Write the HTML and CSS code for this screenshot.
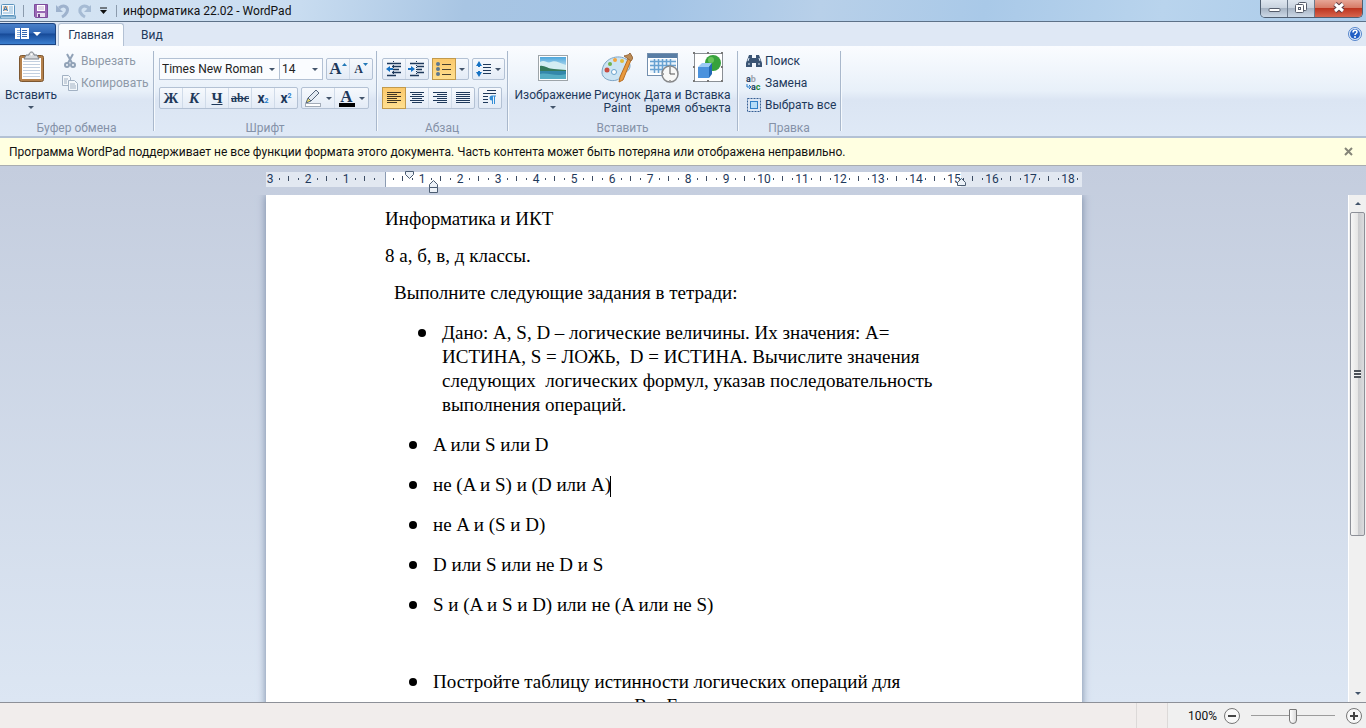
FILE: index.html
```
<!DOCTYPE html>
<html lang="ru">
<head>
  <meta charset="UTF-8" />
  <meta name="viewport" content="width=device-width, initial-scale=1.0"/>
  <title>информатика 22.02 - WordPad</title>
  <link rel="stylesheet" href="styles.css">
</head>
<body>
  <header class="titlebar">
    <svg class="app-icon" width="16" height="16" viewBox="0 0 16 16"><rect x="1.500" y="1.500" width="13" height="11" rx="1" fill="#f4faff" stroke="#5b93bd"/><rect x="3" y="3" width="5" height="5" fill="#f4c9a4"/><path d="M3.500 8l2-5 2 5M4 6.500h3" fill="none" stroke="#3d7db4"/><path d="M9 4h4M9 6h4M9 8h4M3 10h10" stroke="#8cb6d6"/><path d="M0 13h16l-1 3H1z" fill="#a9cbe2" stroke="#5b93bd"/></svg>
    <span class="title-sep"></span>
    <button class="quick-btn" aria-label="Сохранить"><svg width="16" height="16" viewBox="0 0 16 16"><path d="M1.500 1.500h13v13h-12l-1-1z" fill="#9968b5" stroke="#7d4c9c"/><rect x="4" y="2" width="8" height="6" fill="#fff"/><path d="M5 4h6M5 6h6" stroke="#c6b3d3"/><rect x="4" y="10" width="8" height="4" fill="#e9dff0"/><rect x="5" y="11" width="2" height="3" fill="#724590"/></svg></button>
    <button class="quick-btn" aria-label="Отменить"><svg width="16" height="16" viewBox="0 0 16 16"><path d="M4 5c5-4 10-1 8 4-1 2-3 4-5 5" fill="none" stroke="#9eb2cd" stroke-width="3"/><path d="M1 2v7h7z" fill="#9eb2cd"/></svg></button>
    <button class="quick-btn" aria-label="Повторить"><svg width="16" height="16" viewBox="0 0 16 16"><path d="M12 5c-5-4-10-1-9 4 1 2 3 4 5 5" fill="none" stroke="#a6bbd4" stroke-width="3"/><path d="M14 2v7H7z" fill="#a6bbd4"/></svg></button>
    <button class="quick-btn quick-more" aria-label="Настройка панели"><svg width="9" height="7" viewBox="0 0 9 7"><path d="M1 1h7" stroke="#111"/><path d="M1 3h7L4.500 7z" fill="#111"/></svg></button>
    <span class="title-sep"></span>
    <h1 class="title">информатика 22.02 - WordPad</h1>
    <div class="window-btns">
      <button class="win-btn" aria-label="Свернуть"><svg width="13" height="16" viewBox="0 0 13 16"><rect x="1" y="8.500" width="11" height="3" rx="1" fill="#fff" stroke="#555c6b"/></svg></button>
      <button class="win-btn" aria-label="Восстановить"><svg width="14" height="16" viewBox="0 0 14 16"><g fill="#fff" stroke="#555c6b"><rect x="4.500" y="2.500" width="8" height="8" rx="1"/><rect x="1.500" y="4.500" width="8" height="8" rx="1"/><rect x="4.500" y="7.500" width="2" height="2"/></g></svg></button>
      <button class="win-btn close-btn" aria-label="Закрыть"><svg width="14" height="16" viewBox="0 0 14 16"><path d="M3 4l8 7M11 4l-8 7" stroke="#5a3a42" stroke-width="5"/><path d="M3 4l8 7M11 4l-8 7" stroke="#fff" stroke-width="3"/></svg></button>
    </div>
  </header>

  <nav class="tabs">
    <button class="file-btn" aria-label="WordPad">
      <svg width="26" height="12" viewBox="0 0 26 12"><rect width="14" height="11" fill="#fff"/><path d="M2 2.500h3M2 4.500h3M2 6.500h3M2 8.500h3" stroke="#86aee0"/><path d="M5.500 0v11" stroke="#2b62b5"/><path d="M7 2.500h5M7 4.500h5M7 6.500h5M7 8.500h5" stroke="#3568b0"/><path d="M18 4h8l-4 4z" fill="#fff"/></svg>
    </button>
    <a href="#" class="tab active">Главная</a>
    <a href="#" class="tab">Вид</a>
    <button class="help-btn" aria-label="Справка"><svg width="14" height="14" viewBox="0 0 14 14"><circle cx="7" cy="7" r="6.500" fill="#dfeafa" stroke="#5585ca"/><circle cx="7" cy="7" r="5" fill="#225fc5"/><path d="M5 5.500c0-3 4-3 4-.5 0 1.500-2 1.500-2 3M7 9v2" fill="none" stroke="#fff" stroke-width="1.500"/></svg></button>
  </nav>

  <section class="ribbon">
    <div class="group group-clipboard">
      <div class="group-body">
        <button class="big-btn paste-btn">
          <svg width="32" height="32" viewBox="0 0 32 32"><rect x="4.500" y="4.500" width="24" height="26" rx="2" fill="#b5814c" stroke="#7d5730"/><path d="M7 7h19v21H7z" fill="#fff"/><path d="M8 10.500h17M8 13.500h17M8 16.500h17M8 19.500h17M8 22.500h17M8 25.500h17" stroke="#c3d0e0"/><path d="M9 8l2-4h3c0-4 5-4 5 0h3l2 4z" fill="#d5d8dc" stroke="#777d85"/><circle cx="16.500" cy="3.500" r="1" fill="#fff"/></svg>
          <span>Вставить</span>
          <i class="arrow"></i>
        </button>
        <div class="stack">
          <button class="line-btn" disabled><svg width="16" height="16" viewBox="0 0 16 16"><path d="M5 1l5 9M11 1l-5 9" stroke="#91a2b7" stroke-width="2"/><circle cx="5" cy="12" r="2" fill="none" stroke="#91a2b7" stroke-width="2"/><circle cx="11" cy="12" r="2" fill="none" stroke="#91a2b7" stroke-width="2"/></svg>Вырезать</button>
          <button class="line-btn" disabled><svg width="16" height="16" viewBox="0 0 16 16"><g fill="#f3f7fb" stroke="#a2b1c3"><path d="M.5.5h6l2 2v8h-8z"/><path d="M6.500 5.500h6l3 3v7h-9z"/></g><path d="M2 4h4M2 6h3M2 8h3M8 9h5M8 11h6M8 13h6" stroke="#a2b1c3"/></svg>Копировать</button>
        </div>
      </div>
      <h2>Буфер обмена</h2>
    </div>

    <div class="group group-font">
      <div class="group-body rows">
        <div class="row">
          <div class="combos">
            <label class="combo combo-font"><select aria-label="Шрифт"><option>Times New Roman</option></select></label>
            <label class="combo combo-size"><select aria-label="Размер"><option>14</option></select></label>
          </div>
          <div class="btns">
            <button class="tool serif grow" aria-label="Увеличить шрифт">A<svg width="5" height="3" viewBox="0 0 5 3"><path d="M0 3h5L2.500 0z" fill="#2379b8"/></svg></button>
            <button class="tool serif shrink" aria-label="Уменьшить шрифт">A<svg width="5" height="3" viewBox="0 0 5 3"><path d="M0 0h5L2.500 3z" fill="#2379b8"/></svg></button>
          </div>
        </div>
        <div class="row">
          <div class="btns">
            <button class="tool serif">Ж</button>
            <button class="tool serif italic">К</button>
            <button class="tool serif under">Ч</button>
            <button class="tool serif strike">abc</button>
            <button class="tool index">x<sub>2</sub></button>
            <button class="tool index">x<sup>2</sup></button>
          </div>
          <div class="btns">
            <button class="tool wide" aria-label="Цвет выделения"><svg width="18" height="18" viewBox="0 0 18 18"><path d="M4 9l8-8 3 3-8 8z" fill="#e2e9f2" stroke="#53647b"/><path d="M4 9l3 3-5 2z" fill="#f0dc63" stroke="#53647b"/><rect x="1.500" y="14.500" width="15" height="3" fill="#fff" stroke="#a3acb8"/></svg><i class="arrow"></i></button>
            <button class="tool wide serif" aria-label="Цвет текста"><span class="font-color">A</span><i class="arrow"></i></button>
          </div>
        </div>
      </div>
      <h2>Шрифт</h2>
    </div>

    <div class="group group-para">
      <div class="group-body rows">
        <div class="row">
          <div class="btns">
            <button class="tool" aria-label="Уменьшить отступ"><svg width="18" height="16" viewBox="0 0 18 16"><path d="M2 2.500h14M7 5.500h9M8 8.500h6M7 11.500h9M2 14.500h9" stroke="#1e395b" stroke-width="1.500"/><path d="M8.500 0v16" stroke="#1e395b" stroke-dasharray="1 1"/><path d="M1 8l4-3v2h3v2H5v2z" fill="#1672c4"/></svg></button>
            <button class="tool" aria-label="Увеличить отступ"><svg width="18" height="16" viewBox="0 0 18 16"><path d="M2 2.500h14M9 5.500h7M9 8.500h5M9 11.500h7M2 14.500h9" stroke="#1e395b" stroke-width="1.500"/><path d="M8.500 0v16" stroke="#1e395b" stroke-dasharray="1 1"/><path d="M7 8L3 5v2H0v2h3v2z" fill="#1672c4"/></svg></button>
          </div>
          <div class="btns">
            <button class="tool on" aria-label="Список"><svg width="16" height="14" viewBox="0 0 16 14"><path d="M6 2.500h9M6 7.500h9M6 12.500h9" stroke="#49412f"/><g fill="#5d7890"><circle cx="2" cy="2" r="2"/><circle cx="2" cy="7" r="2"/><circle cx="2" cy="12" r="2"/></g></svg></button>
            <button class="tool tiny" aria-label="Виды списков"><i class="arrow"></i></button>
          </div>
          <div class="btns">
            <button class="tool spacing" aria-label="Интервал"><svg width="16" height="16" viewBox="0 0 16 16"><path d="M7 3.500h8M7 6.500h8M7 9.500h8M7 12.500h8" stroke="#1e395b"/><path d="M0 5l3-5 3 5H4v1H2V5zM0 11h2v-1h2v1h2l-3 5z" fill="#1672c4"/></svg><i class="arrow"></i></button>
          </div>
        </div>
        <div class="row">
          <div class="btns">
            <button class="tool on" aria-label="По левому краю"><svg width="15" height="13" viewBox="0 0 15 13"><path d="M0 .5h14M0 2.500h10M0 4.500h14M0 6.500h10M0 8.500h14M0 10.500h10" stroke="#403623"/></svg></button>
            <button class="tool" aria-label="По центру"><svg width="15" height="13" viewBox="0 0 15 13"><path d="M0 .5h14M2 2.500h10M0 4.500h14M2 6.500h10M0 8.500h14M2 10.500h10" stroke="#1e395b"/></svg></button>
            <button class="tool" aria-label="По правому краю"><svg width="15" height="13" viewBox="0 0 15 13"><path d="M0 .5h14M4 2.500h10M0 4.500h14M4 6.500h10M0 8.500h14M4 10.500h10" stroke="#1e395b"/></svg></button>
            <button class="tool" aria-label="По ширине"><svg width="15" height="13" viewBox="0 0 15 13"><path d="M0 .5h14M0 2.500h14M0 4.500h14M0 6.500h14M0 8.500h14M0 10.500h14" stroke="#1e395b"/></svg></button>
          </div>
          <div class="btns">
            <button class="tool" aria-label="Абзац"><svg width="14" height="16" viewBox="0 0 14 16"><path d="M4 .5h9M0 3.500h13M0 6.500h5M0 9.500h5M0 12.500h5" stroke="#1e395b"/><path d="M9.500 6v8M11.500 6v8M9 6h4" stroke="#348ed6"/><path d="M9 5.500a2.500 2.500 0 0 0 0 5z" fill="#348ed6"/></svg></button>
          </div>
        </div>
      </div>
      <h2>Абзац</h2>
    </div>

    <div class="group group-insert">
      <div class="group-body">
        <button class="big-btn">
          <svg width="32" height="32" viewBox="0 0 32 32"><defs><linearGradient id="sky" x2="0" y2="1"><stop offset="0" stop-color="#4da6dc"/><stop offset="1" stop-color="#e2f4f6"/></linearGradient></defs><rect x="1.500" y="4.500" width="29" height="25" fill="#fff" stroke="#9da4a9"/><rect x="3" y="6" width="26" height="14" fill="url(#sky)"/><path d="M3 11c5-3 7 2 11 0s8 1 15 3v6H3z" fill="#d3edf3"/><path d="M3 15c4-1 8 3 14 3l12 1v2H3z" fill="#34795b"/><path d="M3 20h26v8H3z" fill="#3387aa"/><path d="M3 23c8-2 15 3 26 0v5H3z" fill="#54acc3"/></svg>
          <span>Изображение</span>
          <i class="arrow"></i>
        </button>
        <button class="big-btn">
          <svg width="32" height="32" viewBox="0 0 32 32"><path d="M5 11C14 2 29 6 29 15c0 7-8 5-9 10-2 7-18 6-19-3 0-4 1-8 4-11z" fill="#cce4f3" stroke="#7ba3c3"/><circle cx="14" cy="9" r="2" fill="#f5a43b"/><circle cx="21" cy="10" r="2" fill="#e2bd3a"/><circle cx="9" cy="13" r="2" fill="#72b24d"/><circle cx="6" cy="19" r="2.500" fill="#c84d42"/><circle cx="13" cy="21" r="2.500" fill="#fff" stroke="#6ba3cd"/><path d="M27 8l3 1-8 20-4 2 1-5z" fill="#e99a3d" stroke="#b66d24"/><path d="M23 5c2-1 4 0 6-3l3 5-2 3z" fill="#bb8b55" stroke="#98683b"/></svg>
          <span>Рисунок<br>Paint</span>
        </button>
        <button class="big-btn">
          <svg width="32" height="32" viewBox="0 0 32 32"><rect x=".5" y="2.500" width="30" height="22" fill="#fff" stroke="#738fae"/><rect x="1" y="3" width="29" height="4" fill="#587da5"/><path d="M3 8h26v14H3z" fill="#e9f3fb"/><path d="M3 10.500h26M3 14.500h26M3 18.500h26M7.500 8v14M11.500 8v14M15.500 8v14M19.500 8v14M23.500 8v14" stroke="#67a1d1" stroke-width="1.500"/><circle cx="23" cy="23" r="8" fill="#f8f8f7" stroke="#868789" stroke-width="1.500"/><path d="M23 17v6h5M23 16v1M23 29v1M16 23h1" fill="none" stroke="#555"/></svg>
          <span>Дата и<br>время</span>
        </button>
        <button class="big-btn">
          <svg width="32" height="32" viewBox="0 0 32 32"><rect x="2.500" y="2.500" width="28" height="28" fill="#fff" stroke="#8a8f95"/><circle cx="21" cy="12" r="8" fill="#36a23d"/><circle cx="19" cy="9" r="3" fill="#68c45b"/><path d="M6 16l4-4h10l-3 4z" fill="#9bcaf5"/><path d="M6 16h11v11H6z" fill="#4b92dd"/><path d="M17 16l3-4v11l-3 4z" fill="#2368b5"/><g fill="#777"><path d="M1 1h2v2H1zM15 1h2v2h-2zM29 1h2v2h-2zM1 29h2v2H1zM15 29h2v2h-2zM29 29h2v2h-2zM1 15h2v2H1zM29 15h2v2h-2z"/></g></svg>
          <span>Вставка<br>объекта</span>
        </button>
      </div>
      <h2>Вставить</h2>
    </div>

    <div class="group group-edit">
      <div class="group-body stack">
        <button class="line-btn"><svg width="16" height="16" viewBox="0 0 16 16"><path d="M3 2h3v3h4V2h3l3 8v4h-6v-4H6v4H0v-4z" fill="#3a5474"/><path d="M2 8l1-3M13 5l1 3M2 11h2M12 11h2" stroke="#dce8f4"/></svg>Поиск</button>
        <button class="line-btn"><svg class="replace-icon" width="16" height="16" viewBox="0 0 16 16"><text x="0" y="7" fill="#243f63">a<tspan fill="#a0a5ad">b</tspan></text><text x="5" y="15" fill="#243f63">a<tspan fill="#1c8a3a">c</tspan></text><path d="M1 9v3h3M3 10l2 2-2 2" fill="none" stroke="#2379c9"/></svg>Замена</button>
        <button class="line-btn"><svg width="16" height="16" viewBox="0 0 16 16"><rect x="1.500" y="1.500" width="13" height="13" fill="none" stroke="#355e94" stroke-dasharray="2 1"/><rect x="4.500" y="4.500" width="7" height="7" fill="#b5dcf8" stroke="#2f7fc8"/></svg>Выбрать все</button>
      </div>
      <h2>Правка</h2>
    </div>
  </section>

  <div class="infobar">
    <p>Программа WordPad поддерживает не все функции формата этого документа. Часть контента может быть потеряна или отображена неправильно.</p>
    <button aria-label="Закрыть сообщение"><svg width="9" height="9" viewBox="0 0 9 9"><path d="M1 1l7 7M8 1L1 8" stroke="#858578" stroke-width="2"/></svg></button>
  </div>

  <main class="workspace">
    <div class="ruler">
      <div class="scale">
        <span>3</span><span>2</span><span>1</span><span></span><span>1</span><span>2</span><span>3</span><span>4</span><span>5</span><span>6</span><span>7</span><span>8</span><span>9</span><span>10</span><span>11</span><span>12</span><span>13</span><span>14</span><span>15</span><span>16</span><span>17</span><span>18</span>
      </div>
      <svg class="marker first-indent" width="10" height="8" viewBox="0 0 10 8"><path d="M.5.5h8v3l-4 4-4-4z" fill="#edf2f8" stroke="#4c5d72"/></svg>
      <svg class="marker left-indent" width="10" height="14" viewBox="0 0 10 14"><path d="M.5 7.500v-3l4-4 4 4v3zM.5 7.500h8v5h-8z" fill="#edf2f8" stroke="#4c5d72"/></svg>
      <svg class="marker right-indent" width="10" height="9" viewBox="0 0 10 9"><path d="M.5 7.500v-3l4-4 4 4v3z" fill="#edf2f8" stroke="#4c5d72"/></svg>
    </div>
    <div class="view">
      <article class="page">
        <p>Информатика и ИКТ</p>
        <p>8 а, б, в, д классы.</p>
        <p class="task">Выполните следующие задания в тетради:</p>
        <ul class="outer">
          <li><span>Дано: A, S, D – логические величины. Их значения: A=<br>ИСТИНА, S = ЛОЖЬ,&nbsp; D = ИСТИНА. Вычислите значения<br>следующих&nbsp; логических формул, указав последовательность<br>выполнения операций.</span></li>
        </ul>
        <ul>
          <li><span>A или S или D</span></li>
          <li><span>не (A и S) и (D или A)<i class="caret"></i></span></li>
          <li><span>не A и (S и D)</span></li>
          <li><span>D или S или не D и S</span></li>
          <li><span>S и (A и S и D) или не (A или не S)</span></li>
        </ul>
        <p>&nbsp;</p>
        <ul>
          <li><span>Постройте таблицу истинности логических операций для<br>нескольких переменных В и Е</span></li>
        </ul>
      </article>
    </div>
    <div class="scrollbar">
      <button aria-label="Вверх"><i class="arrow up"></i></button>
      <div class="thumb"><span></span></div>
      <button aria-label="Вниз"><i class="arrow"></i></button>
    </div>
  </main>

  <footer class="status">
    <span class="pane"></span>
    <div class="zoom">
      <label for="zoom">100%</label>
      <button aria-label="Уменьшить"><svg width="16" height="16" viewBox="0 0 16 16"><circle cx="8" cy="8" r="7.500" fill="#f8f8f8" stroke="#777"/><path d="M4 8h8" stroke="#444" stroke-width="2"/></svg></button>
      <input type="range" id="zoom" min="0" max="100" value="50">
      <button aria-label="Увеличить"><svg width="16" height="16" viewBox="0 0 16 16"><circle cx="8" cy="8" r="7.500" fill="#f8f8f8" stroke="#777"/><path d="M4 8h8M8 4v8" stroke="#444" stroke-width="2"/></svg></button>
    </div>
  </footer>
</body>
</html>
```
FILE: styles.css
```
:root {
  --text: #1e395b;
  --muted: #8592a8;
  --line: #b3c1d4;
}

* {
  box-sizing: border-box;
}

body {
  margin: 0;
  height: 100vh;
  display: flex;
  flex-direction: column;
  overflow: hidden;
  font-family: Roboto, "Open Sans", sans-serif;
  font-size: 12px;
  line-height: 16px;
  color: var(--text);
}

button {
  margin: 0;
  padding: 0;
  border: none;
  background: none;
  font: inherit;
  color: inherit;
}

svg {
  display: block;
  flex: none;
}

h1, h2, p, ul {
  margin: 0;
  padding: 0;
  font-size: 12px;
  font-weight: normal;
}

.arrow {
  border: 3px solid transparent;
  border-top-color: #43546b;
  border-bottom: none;
}

.arrow.up {
  border-top: none;
  border-bottom: 3px solid #43546b;
}

/* title bar */
.titlebar {
  display: flex;
  align-items: center;
  height: 22px;
  background: linear-gradient(100deg, #d8e6f4, #c8dcf0 22%, #a8c5e3 34%, #a3c4e6 48%, #b8d0e9 60%, #a9c9e8 72%, #b9d4ed 85%, #a9cae9);
  border-bottom: 1px solid #5d7188;
}

.title-sep {
  width: 1px;
  height: 12px;
  margin: 0 6px 0 7px;
  background: #8b9bad;
}

.quick-btn {
  margin: 0 3px;
}

.quick-more {
  margin: 0 1px 0 3px;
}

.title {
  color: #111;
}

.window-btns {
  display: flex;
  align-self: flex-start;
  margin-left: auto;
  margin-right: 3px;
  border: 1px solid #4f5e71;
  border-top: none;
  border-radius: 0 0 5px 5px;
  overflow: hidden;
}

.win-btn {
  width: 27px;
  height: 17px;
  display: flex;
  justify-content: center;
  background: linear-gradient(#dee6ef, #c9d3df 45%, #a7b4c4 50%, #ccd8e6);
  border-right: 1px solid #6c7a8c;
}

.close-btn {
  width: 47px;
  border: none;
  background: linear-gradient(#e6a596, #d77b67 45%, #bd3520 50%, #d7654d);
}

/* tabs */
.tabs {
  display: flex;
  align-items: flex-end;
  height: 24px;
  background: #dfe8f5;
}

.file-btn {
  width: 56px;
  height: 22px;
  margin: 0 2px 1px 0;
  display: flex;
  justify-content: center;
  align-items: center;
  border: 1px solid #1b4380;
  border-left: none;
  border-radius: 0 3px 0 0;
  background: linear-gradient(#4a80c8, #2f66b5 45%, #174a98 50%, #3b7fd0);
}

.tab {
  height: 23px;
  padding: 3px 12px 0;
  border: 1px solid transparent;
  color: var(--text);
  text-decoration: none;
}

.tab.active {
  width: 66px;
  padding: 3px 0 0;
  text-align: center;
  background: #fbfdff;
  border-color: var(--line);
  border-bottom: none;
  border-radius: 3px 3px 0 0;
}

.tab + .tab {
  margin-left: 4px;
}

.help-btn {
  align-self: center;
  margin-left: auto;
  margin-right: 4px;
}

/* ribbon */
.ribbon {
  display: flex;
  height: 92px;
  padding-top: 5px;
  background: linear-gradient(#fafcff, #e8f0f9 50%, #dbe5f3 60%, #dfe9f6);
  border-bottom: 2px solid var(--line);
}

.group {
  display: flex;
  flex-direction: column;
  justify-content: space-between;
  height: 80px;
  border-right: 1px solid #a9b8cc;
  box-shadow: 1px 0 0 #f5f9fd;
}

.group h2 {
  text-align: center;
  color: var(--muted);
  line-height: 10px;
  margin-bottom: -2px;
}

.group-body {
  display: flex;
  padding-left: 5px;
}

.group-clipboard {
  width: 154px;
}

.group-clipboard .group-body {
  padding-left: 0;
}

.group-font {
  width: 223px;
}

.group-para {
  width: 131px;
}

.group-insert {
  width: 230px;
}

.group-edit {
  width: 103px;
}

.big-btn {
  display: flex;
  flex-direction: column;
  align-items: center;
  min-width: 42px;
  padding: 0 1px;
  line-height: 13px;
  white-space: nowrap;
}

.big-btn:first-child {
  min-width: 80px;
}

.big-btn svg {
  margin-bottom: 6px;
}

.big-btn .arrow {
  margin-top: 4px;
}

.big-btn.paste-btn {
  min-width: 62px;
}

.stack {
  display: flex;
  flex-direction: column;
  gap: 6px;
  padding-top: 2px;
}

.group-edit .stack {
  padding-left: 8px;
}

.line-btn {
  display: flex;
  align-items: center;
  gap: 3px;
  white-space: nowrap;
}

.line-btn:disabled {
  color: #8e99a8;
}

.replace-icon {
  overflow: visible;
  font-size: 9px;
  font-weight: bold;
  line-height: 8px;
}

.rows {
  flex-direction: column;
  gap: 7px;
  padding-top: 7px;
}

.row {
  display: flex;
  gap: 3px;
}

.btns {
  display: flex;
  height: 22px;
  border: 1px solid var(--line);
  border-radius: 2px;
  background: linear-gradient(#f6f9fd, #e3ebf6);
}

.tool {
  width: 23px;
  display: flex;
  justify-content: center;
  align-items: center;
  border-right: 1px solid #d0dbe9;
}

.tool.on {
  width: 24px;
  margin: -1px 0 -1px -1px;
  border: 1px solid #c29a4c;
  background: linear-gradient(#fbc96c, #ffdf8f);
}

.tool:last-child {
  width: 22px;
  border-right: none;
}

.tool.wide {
  width: 33px;
  gap: 4px;
}

.tool.tiny {
  width: 12px;
}

.tool.spacing {
  width: 31px;
  gap: 3px;
}

.serif {
  font-family: "Liberation Serif", serif;
  font-weight: bold;
  font-size: 15px;
}

.grow {
  font-size: 17px;
}

.shrink {
  font-size: 12px;
}

.grow svg,
.shrink svg {
  align-self: flex-start;
  margin-top: 4px;
}

.italic {
  font-style: italic;
}

.under {
  text-decoration: underline;
}

.strike {
  font-size: 12px;
  text-decoration: line-through;
}

.index {
  font-weight: bold;
  font-size: 14px;
}

.index sub,
.index sup {
  font-size: 7px;
  line-height: 8px;
  color: #2379c9;
}

.index sub {
  align-self: flex-end;
  margin-bottom: 3px;
}

.index sup {
  align-self: flex-start;
  margin-top: 4px;
}

.font-color {
  width: 16px;
  font-size: 17px;
  line-height: 13px;
  border-bottom: 4px solid #000;
}

.combos {
  display: flex;
}

.combo {
  display: flex;
  align-items: center;
  height: 22px;
  border: 1px solid var(--line);
  background: #fafcff;
}

.combo select {
  width: 100%;
  padding: 0 2px;
  border: none;
  appearance: none;
  background: none;
  font: inherit;
  color: #222;
}

.combo::after {
  content: "";
  flex: none;
  margin-right: 4px;
  border: 3px solid transparent;
  border-top-color: #43546b;
  border-bottom: none;
}

.combo-font {
  width: 121px;
}

.combo-size {
  width: 43px;
  border-left: none;
}

/* message */
.infobar {
  display: flex;
  align-items: center;
  justify-content: space-between;
  height: 28px;
  padding: 0 13px 0 9px;
  background: #ffffe1;
  border-bottom: 1px solid #a9adb0;
  color: #111;
  white-space: nowrap;
}

/* document */
.workspace {
  flex: 1;
  min-height: 0;
  display: grid;
  grid-template-columns: 1fr 18px;
  grid-template-rows: 29px 1fr;
  background: linear-gradient(#c4cdde, #dce6f3);
}

.ruler {
  position: relative;
  width: 816px;
  height: 15px;
  margin: 6px auto 0;
  background: linear-gradient(90deg, #e2e8f1 119px, #8b9bb2 119px, #8b9bb2 120px, #fff 120px, #fff 695px, #e2e8f1 695px);
}

.scale {
  display: flex;
  overflow: hidden;
}

.scale span {
  flex: none;
  width: 38px;
  height: 15px;
  line-height: 14px;
  text-align: center;
  background:
    linear-gradient(#3c4c63, #3c4c63) 9px 6px / 1px 2px no-repeat,
    linear-gradient(#3c4c63, #3c4c63) 28px 6px / 1px 2px no-repeat,
    linear-gradient(#3c4c63, #3c4c63) 37px 4px / 1px 5px no-repeat;
}

.scale span:first-child {
  margin-left: -15px;
}

.marker {
  position: absolute;
}

.first-indent {
  left: 139px;
  top: -1px;
}

.left-indent {
  left: 163px;
  top: 8px;
}

.right-indent {
  left: 691px;
  top: 6px;
}

.view {
  grid-column: 1;
  min-height: 0;
  overflow: hidden;
}

.page {
  width: 816px;
  min-height: 100%;
  margin: 0 auto;
  padding: 12px 119px 0;
  background: #fff;
  box-shadow: 0 0 8px #7486a3;
  font-family: "Liberation Serif", serif;
  font-size: 19px;
  line-height: 24px;
  color: #000;
  white-space: nowrap;
}

.page p {
  margin-bottom: 13px;
  font-size: 19px;
}

.page .task {
  margin-bottom: 16px;
  padding-left: 9px;
}

.page ul {
  padding-left: 24px;
  list-style: none;
  font-size: 19px;
}

.page .outer {
  padding-left: 33px;
}

.page li {
  display: flex;
  gap: 16px;
  margin-bottom: 16px;
}

.page li::before {
  content: "";
  flex: none;
  width: 8px;
  height: 8px;
  margin-top: 8px;
  border-radius: 50%;
  background: #000;
}

.caret {
  display: inline-block;
  width: 1px;
  height: 21px;
  margin-left: -1px;
  vertical-align: middle;
  background: #000;
}

.scrollbar {
  grid-column: 2;
  display: flex;
  flex-direction: column;
  align-items: center;
  background: #f0f0f0;
  border-left: 1px solid #fff;
}

.scrollbar button {
  width: 15px;
  height: 17px;
  display: flex;
  justify-content: center;
  align-items: center;
}

.scrollbar button:last-child {
  margin-top: auto;
}

.thumb {
  width: 15px;
  height: 64%;
  display: flex;
  justify-content: center;
  align-items: center;
  border: 1px solid #8d9098;
  border-radius: 2px;
  background: linear-gradient(90deg, #f6f6f6, #e6e6e6 50%, #c9cacd 55%, #dcdcde);
}

.thumb span {
  width: 7px;
  height: 8px;
  background: repeating-linear-gradient(#4d5259 0 2px, #f5f5f5 2px 3px);
}

/* status bar */
.status {
  display: flex;
  justify-content: flex-end;
  height: 26px;
  background: #f1edec;
  border-top: 1px solid #8d9098;
}

.pane {
  width: 32px;
  border: solid #dcd9d8;
  border-width: 0 1px;
}

.zoom {
  display: flex;
  align-items: center;
  gap: 3px;
  padding: 1px 4px 0 20px;
  background: #f0f0f0;
  color: #111;
}

.zoom label {
  margin-right: 4px;
}

.zoom input {
  appearance: none;
  width: 100px;
  height: 18px;
  margin: 0;
  padding: 0 6px;
  background: linear-gradient(#9c9c9c, #9c9c9c) 50% 8px / 84px 1px no-repeat;
}

.zoom input::-webkit-slider-thumb {
  appearance: none;
  width: 8px;
  height: 15px;
  border: 1px solid #777;
  border-radius: 1px 1px 4px 4px;
  background: linear-gradient(90deg, #fff, #dcdcdc);
}
```
